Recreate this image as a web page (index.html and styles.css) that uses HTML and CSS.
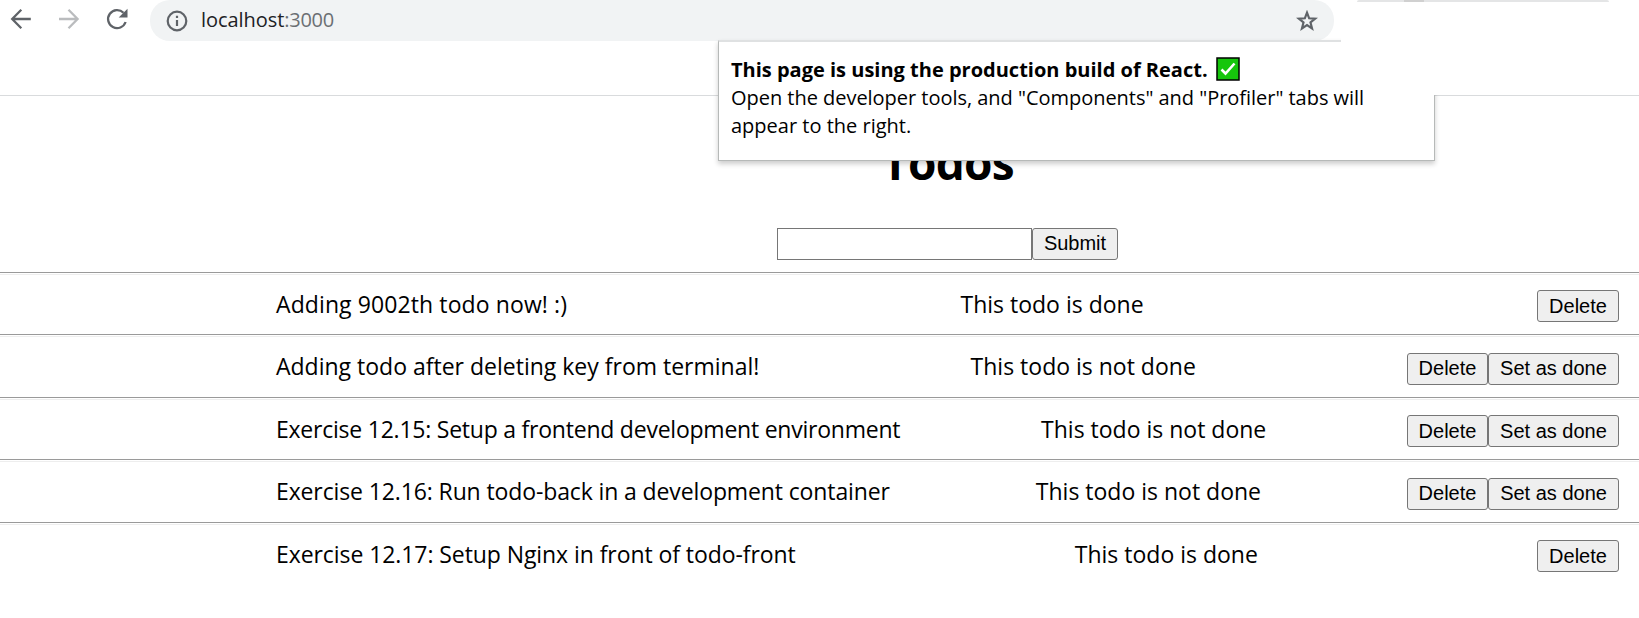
FILE: index.html
```html
<!DOCTYPE html>
<html lang="en">
<head>
<meta charset="utf-8">
<title>Todos</title>
<link rel="stylesheet" href="styles.css">
</head>
<body>
<header class="toolbar">
  <svg class="icon back" viewBox="0 0 24 24"><path d="M21.800 12H3.500M12.300 2.800L3.200 12l9.100 9.200"/></svg>
  <svg class="icon forward" viewBox="0 0 24 24"><path d="M2 12h18.300M11.500 2.800L20.600 12l-9.100 9.200"/></svg>
  <svg class="icon reload" viewBox="0 0 24 24"><path d="M20.600 15A9 9 0 1 1 18.500 5.800"/><path class="solid" d="M22.500 1.800v8.800h-8.800z"/></svg>
  <div class="address">
    <svg class="info" viewBox="0 0 22 22"><circle cx="11" cy="11" r="9.300"/><path d="M11 10v6M11 5.800v2.300"/></svg>
    <span class="url">localhost<span class="port">:3000</span></span>
    <svg class="star" viewBox="0 0 22 22"><path d="M11 2.700l2.150 5.600 6 .4-4.650 3.800 1.550 5.900L11 15.100l-5.050 3.300 1.550-5.900L2.850 8.700l6-.4z"/></svg>
  </div>
  <div class="strip"><i></i></div>
</header>
<main class="page">
  <h1 class="title">Todos</h1>
  <form class="entry"><input class="field" type="text" aria-label="Todo"><button class="btn submit" type="button">Submit</button></form>
  <section class="todos">
    <div class="row"><span class="text t1">Adding 9002th todo now! :)</span><span class="text done">This todo is done</span><div><button class="btn delete-only">Delete</button></div></div>
    <div class="row"><span class="text t2">Adding todo after deleting key from terminal!</span><span class="text open">This todo is not done</span><div><button class="btn delete">Delete</button><button class="btn set">Set as done</button></div></div>
    <div class="row"><span class="text t3">Exercise 12.15: Setup a frontend development environment</span><span class="text open">This todo is not done</span><div><button class="btn delete">Delete</button><button class="btn set">Set as done</button></div></div>
    <div class="row"><span class="text t4">Exercise 12.16: Run todo-back in a development container</span><span class="text open">This todo is not done</span><div><button class="btn delete">Delete</button><button class="btn set">Set as done</button></div></div>
    <div class="row"><span class="text t5">Exercise 12.17: Setup Nginx in front of todo-front</span><span class="text done">This todo is done</span><div><button class="btn delete-only">Delete</button></div></div>
  </section>
</main>
<aside class="popup">
  <div class="line head"><b>This page is using the production build of React.</b><svg class="check" viewBox="0 0 24 24"><rect x="1" y="1" width="22" height="22"/><path d="M5.500 12.500l4 4 9-10"/></svg></div>
  <div class="line l2">Open the developer tools, and "Components" and "Profiler" tabs will</div>
  <div class="line l3">appear to the right.</div>
</aside>
<div class="patch"></div>
</body>
</html>
```

FILE: styles.css
```css
* { box-sizing: border-box; }
body {
  margin: 0;
  height: 618px;
  overflow: hidden;
  background: #fff;
  color: #000;
  font-family: "Open Sans", "Noto Sans", sans-serif;
}

/* Browser toolbar */
.toolbar {
  display: flex;
  align-items: flex-start;
  height: 96px;
  padding-left: 9px;
  border-bottom: 1px solid #d9dbdd;
}
.icon {
  flex: none;
  width: 24px;
  height: 24px;
  margin: 7px 24px 0 0;
  fill: none;
  stroke: #5f6368;
  stroke-width: 2.300;
}
.forward { stroke: #babcbe; }
.reload { margin-right: 21px; }
.solid { fill: #5f6368; stroke: none; }
.address {
  display: flex;
  align-items: center;
  width: 1184px;
  height: 41px;
  padding: 0 16px 0 16px;
  border-radius: 20px;
  background: #f1f3f4;
}
.info, .star { flex: none; width: 22px; height: 22px; fill: none; stroke: #5f6368; stroke-width: 2.200; }
.url { flex: 1; margin-left: 13px; font-size: 20px; line-height: 40px; margin-top: -2px; letter-spacing: -.05px; color: #202124; }
.port { color: #6b6f73; letter-spacing: -.3px; }
.strip { width: 252px; height: 2px; margin-left: 23px; background: #e4e5e6; border-radius: 0 0 4px 4px; }
.strip { border-radius: 4px 4px 0 0; }
.strip i { display: block; width: 20px; height: 2px; margin-left: 47px; background: #d0d0d0; }

/* Todo page */
.title {
  height: 64px;
  margin: 34px 19px 0 276px;
  font-size: 46px;
  line-height: 64px;
  letter-spacing: -.7px;
  text-align: center;
}
.entry { display: flex; margin: 34px 0 12px 777px; }
.field { width: 255px; height: 32px; padding: 0 3px; border: 1px solid #767676; border-radius: 0; }
.btn {
  height: 32px;
  padding: 0;
  border: 1px solid #767676;
  border-radius: 3px;
  background: #efefef;
  color: #000;
  font: 20px/28px "Liberation Sans", Arial, sans-serif;
}
.submit, .row:nth-child(even) .btn { padding-bottom: 2px; }
.submit { width: 86px; }
.delete { width: 81px; }
.delete-only { width: 82px; }
.set { width: 131px; }
.row {
  display: flex;
  justify-content: space-between;
  height: 62px;
  padding: 17px 20px 0 276px;
  border-top: 1px solid #9a9a9a;
  box-shadow: inset 0 1px #fff, inset 0 2px #eee;
}
.row:nth-child(even) { height: 63px; padding-top: 18px; }
.row > div { display: flex; }
.text { margin-top: -1px; font-size: 23px; line-height: 30px; white-space: nowrap; }
.row:nth-child(even) .text { margin-top: -2px; }
.t1 { letter-spacing: .1px; }
.t3 { letter-spacing: -.23px; }
.t4 { letter-spacing: -.12px; }
.t5 { letter-spacing: -.075px; }

/* Extension popup */
.popup {
  position: absolute;
  left: 718px;
  top: 40px;
  width: 717px;
  height: 121px;
  padding: 14px 12px;
  border: 1px solid #b6b9b8;
  border-top: 2px solid #dfe1e2;
  background: #fff;
  box-shadow: 0 3px 5px rgba(0, 0, 0, .2);
  font-size: 20px;
  line-height: 28px;
  white-space: nowrap;
}
.line { position: relative; z-index: 2; height: 28px; }
.l2 { letter-spacing: -.03px; }
.head { display: flex; }
.check { width: 24px; height: 24px; margin: 1px 0 0 8px; fill: #16c60c; stroke: #000; stroke-width: 1.500; }
.check path { fill: none; stroke: #fff; stroke-width: 2.600; }
.patch { position: absolute; z-index: 1; left: 1341px; top: 2px; width: 298px; height: 93px; background: #fff; }
```
